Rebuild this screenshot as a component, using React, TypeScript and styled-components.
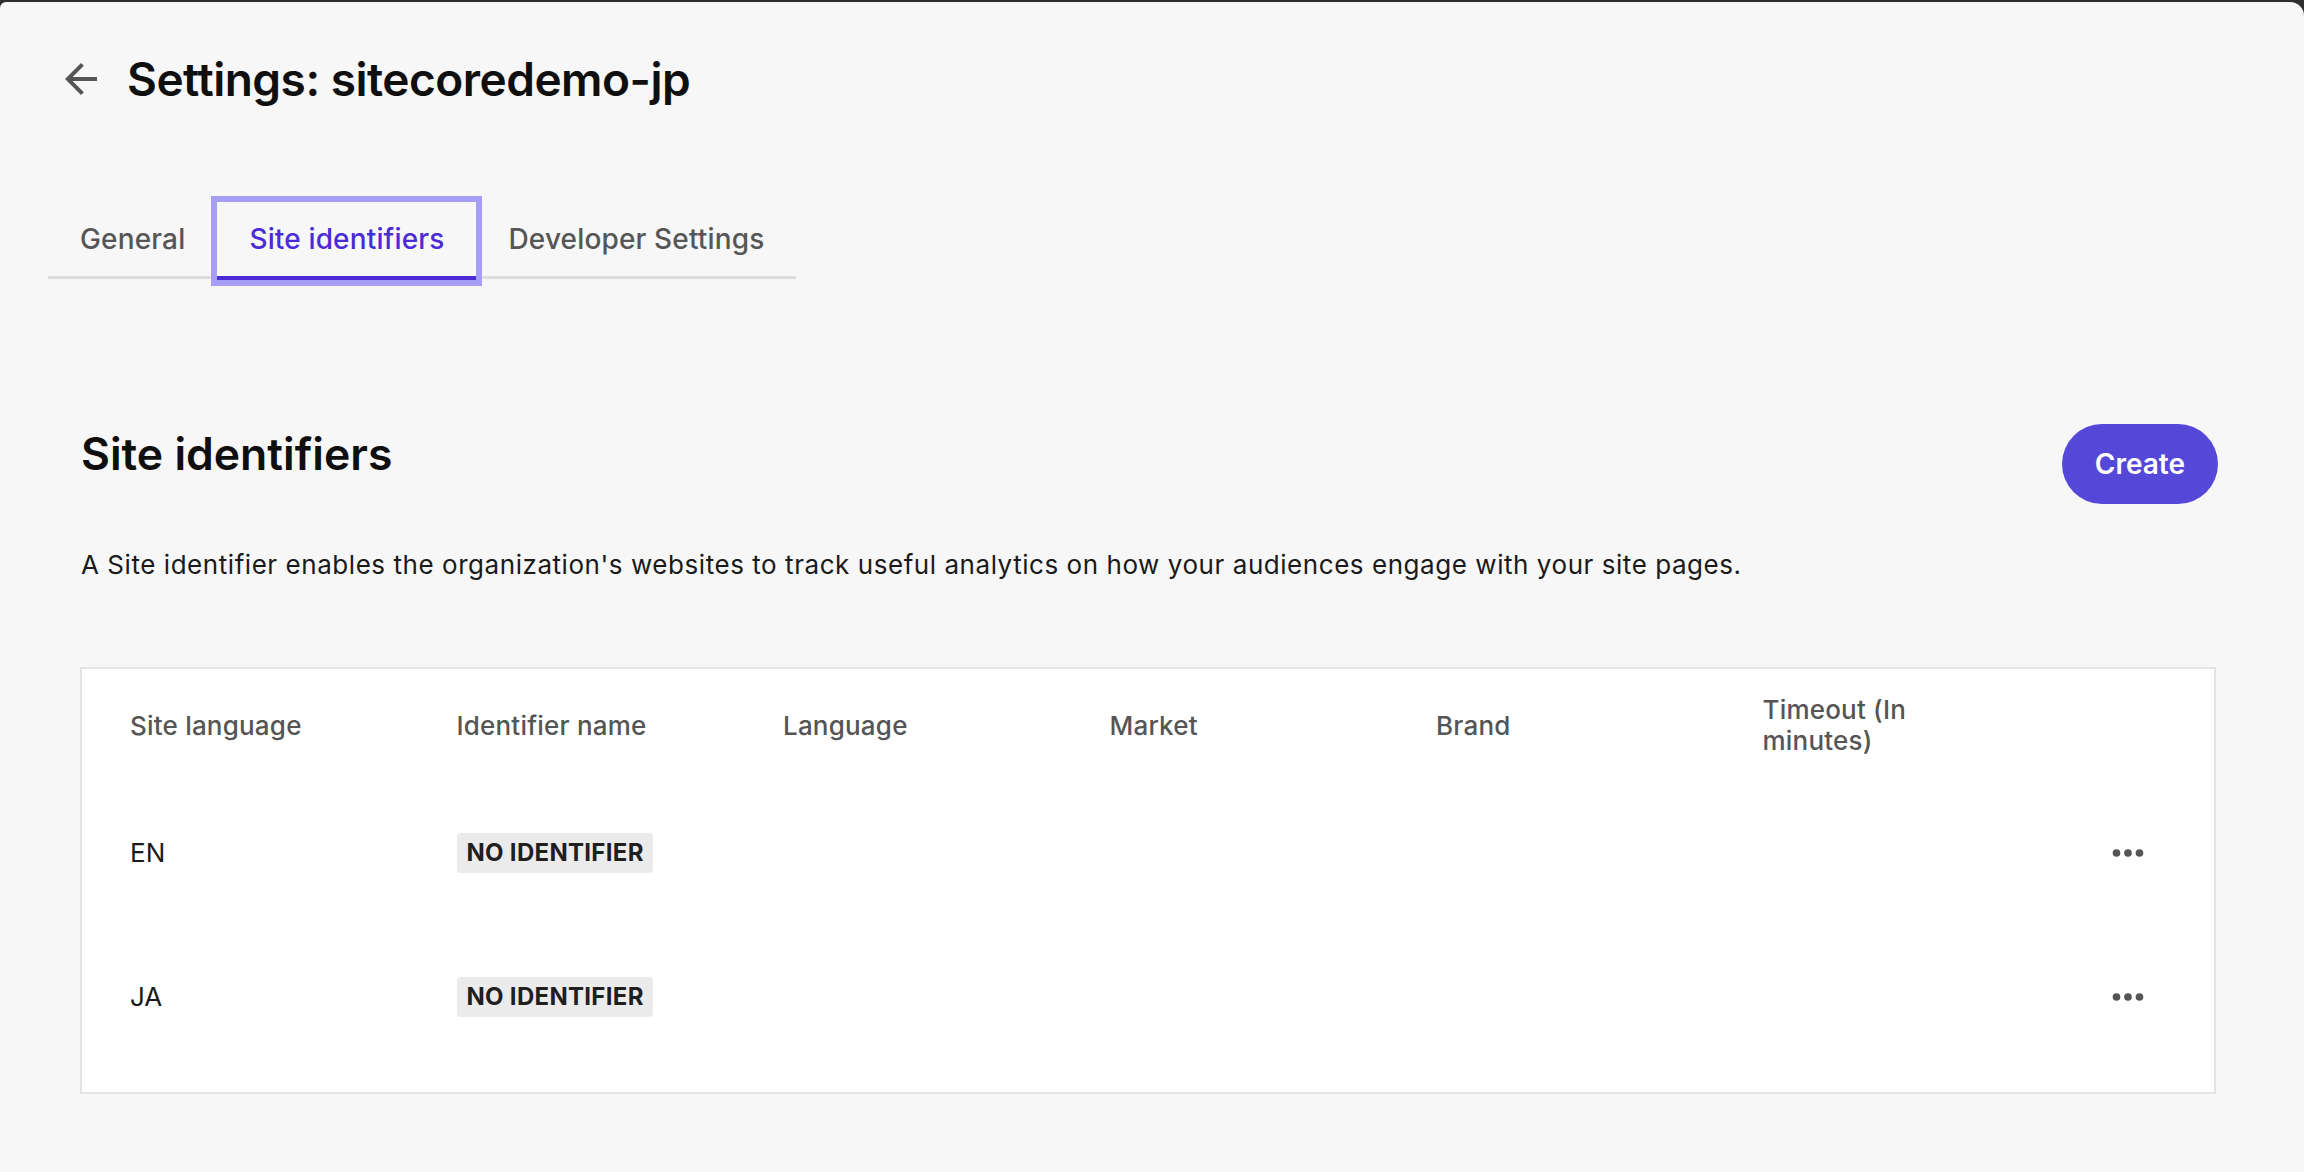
import React from "react";
import styled, { createGlobalStyle } from "styled-components";

const GlobalStyle = createGlobalStyle`
  html, body {
    margin: 0;
    padding: 0;
    background: #2e2e2e;
  }
  body {
    font-family: Inter, "Noto Sans", "Liberation Sans", sans-serif;
    -webkit-font-smoothing: antialiased;
  }
`;

const Window = styled.div`
  margin-top: 2px;
  min-height: calc(100vh - 2px);
  background: #f7f7f7;
  border-radius: 6px 14px 0 0;
  overflow: hidden;
`;

const PageHeader = styled.header`
  display: flex;
  align-items: center;
  padding: 49px 0 0 57px;
`;

const BackButton = styled.button`
  display: flex;
  padding: 0;
  border: none;
  background: none;
  color: #555;
  cursor: pointer;
`;

const Title = styled.h1`
  margin: 0 0 0 22px;
  font-size: 46px;
  line-height: 56px;
  font-weight: 600;
  color: #0f0f0f;
  letter-spacing: -0.5px;
`;

const TabList = styled.div`
  display: inline-flex;
  margin: 95px 0 0 48px;
  background: linear-gradient(#dedede, #dedede) bottom 1px left 0 / 100% 3px no-repeat;
`;

const Tab = styled.button<{ $active?: boolean }>`
  height: 78px;
  padding: 0 32px;
  border: none;
  border-bottom: 4px solid ${({ $active }) => ($active ? "#4b2bd6" : "transparent")};
  background: transparent;
  font-family: inherit;
  font-size: 28px;
  line-height: 74px;
  font-weight: 500;
  letter-spacing: 0.15px;
  color: ${({ $active }) => ($active ? "#4b2bd6" : "#565656")};
  outline: ${({ $active }) => ($active ? "6px solid #a59df6" : "none")};
  cursor: pointer;
`;

const Section = styled.section`
  padding: 0 88px 0 80px;
`;

const SectionHeader = styled.div`
  display: flex;
  justify-content: space-between;
  align-items: flex-start;
  margin-top: 144px;
`;

const Heading = styled.h2`
  margin: 3px 0 0 1px;
  font-size: 44.5px;
  line-height: 54px;
  font-weight: 600;
  color: #0f0f0f;
`;

const CreateButton = styled.button`
  height: 80px;
  margin-right: -2px;
  padding: 0 33px;
  border: none;
  border-radius: 40px;
  background: #5548d9;
  color: #fff;
  font-family: inherit;
  font-size: 28px;
  font-weight: 600;
  cursor: pointer;
`;

const Description = styled.p`
  margin: 43px 0 0 1px;
  font-size: 26px;
  line-height: 36px;
  letter-spacing: 0.55px;
  color: #1a1a1a;
`;

const Table = styled.div`
  margin-top: 84px;
  padding: 0 48px 23px;
  background: #fff;
  border: 2px solid #e4e4e4;
`;

const Row = styled.div<{ $head?: boolean }>`
  display: grid;
  grid-template-columns: repeat(6, 1fr) 77px;
  align-items: center;
  height: ${({ $head }) => ($head ? "112px" : "144px")};
`;

const HeadCell = styled.div<{ $narrow?: boolean }>`
  max-width: ${({ $narrow }) => ($narrow ? "165px" : "none")};
  font-size: 26px;
  line-height: 31px;
  font-weight: 500;
  letter-spacing: 0.2px;
  color: #555;
`;

const Cell = styled.div`
  font-size: 26px;
  line-height: 32px;
  color: #1a1a1a;
`;

const Badge = styled.span`
  display: inline-block;
  padding: 0 9px 0 10px;
  height: 40px;
  line-height: 40px;
  border-radius: 4px;
  background: #ebebeb;
  color: #1f1f1f;
  font-size: 24px;
  font-weight: 700;
  letter-spacing: 0.3px;
`;

const MenuButton = styled.button`
  justify-self: center;
  display: flex;
  padding: 0;
  border: none;
  background: none;
  color: #555;
  cursor: pointer;
`;

const ArrowBack = () => (
  <svg width="48" height="48" viewBox="0 0 24 24" fill="currentColor">
    <path d="M20 11H7.83l5.59-5.59L12 4l-8 8 8 8 1.41-1.41L7.83 13H20v-2z" />
  </svg>
);

const Dots = () => (
  <svg width="46" height="46" viewBox="0 0 24 24" fill="currentColor">
    <circle cx="6" cy="12" r="2" />
    <circle cx="12" cy="12" r="2" />
    <circle cx="18" cy="12" r="2" />
  </svg>
);

const columns = ["Site language", "Identifier name", "Language", "Market", "Brand"];
const rows = [{ lang: "EN" }, { lang: "JA" }];

export default function App() {
  return (
    <>
      <GlobalStyle />
      <Window>
        <PageHeader>
          <BackButton aria-label="Back">
            <ArrowBack />
          </BackButton>
          <Title>Settings: sitecoredemo-jp</Title>
        </PageHeader>

        <TabList>
          <Tab>General</Tab>
          <Tab $active>Site identifiers</Tab>
          <Tab>Developer Settings</Tab>
        </TabList>

        <Section>
          <SectionHeader>
            <Heading>Site identifiers</Heading>
            <CreateButton>Create</CreateButton>
          </SectionHeader>
          <Description>
            A Site identifier enables the organization's websites to track useful analytics on how your
            audiences engage with your site pages.
          </Description>

          <Table>
            <Row $head>
              {columns.map((c) => (
                <HeadCell key={c}>{c}</HeadCell>
              ))}
              <HeadCell $narrow>Timeout (In minutes)</HeadCell>
              <div />
            </Row>
            {rows.map((r) => (
              <Row key={r.lang}>
                <Cell>{r.lang}</Cell>
                <Cell>
                  <Badge>NO IDENTIFIER</Badge>
                </Cell>
                <Cell />
                <Cell />
                <Cell />
                <Cell />
                <MenuButton aria-label="More actions">
                  <Dots />
                </MenuButton>
              </Row>
            ))}
          </Table>
        </Section>
      </Window>
    </>
  );
}
